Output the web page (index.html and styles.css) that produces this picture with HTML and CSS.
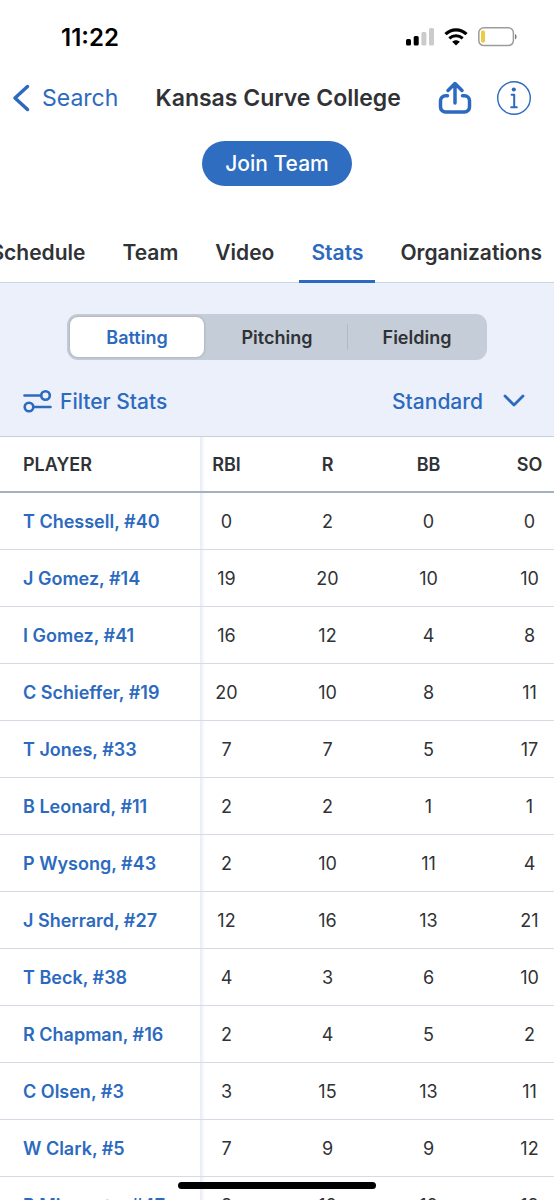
FILE: index.html
```
<!DOCTYPE html>
<html lang="en">
<head>
<meta charset="utf-8">
<meta name="viewport" content="width=device-width, initial-scale=1">
<title>Kansas Curve College</title>
<link rel="stylesheet" href="styles.css">
</head>
<body>
<div class="screen">
  <div class="status">
    <span class="clock">11:22</span>
    <div class="indicators">
      <svg width="28" height="18" viewBox="0 0 28 18"><rect x="0" y="11" width="5" height="6.500" rx="1.500"/><rect x="7.700" y="8" width="5" height="9.500" rx="1.500"/><g fill="#cbcbcb"><rect x="15.400" y="4" width="5" height="13.500" rx="1.500"/><rect x="23" y="0" width="5" height="17.500" rx="1.500"/></g></svg>
      <svg width="24" height="18" viewBox="0 0 24 18" fill="none" stroke="#000"><path d="M1.500 6.200C7.500.4 16.500.4 22.500 6.200" stroke-width="3.200"/><path d="M5.300 10.400c3.900-3.500 9.500-3.500 13.400 0" stroke-width="3"/><path d="M8.200 13.800c2.300-2 5.300-2 7.600 0L12 17.600z" fill="#000" stroke="none"/></svg>
      <svg width="40" height="20" viewBox="0 0 40 20"><rect x=".8" y=".8" width="34.600" height="17.800" rx="5" fill="none" stroke="#9c9c9c" stroke-width="1.500"/><rect x="3" y="3.500" width="4" height="12" rx="1.500" fill="#efc93e"/><path d="M37 7v5.500c2-.6 2-4.900 0-5.500z" fill="#777"/></svg>
    </div>
  </div>
  <header class="nav">
    <a class="back" href="#"><svg width="18" height="28" viewBox="0 0 18 28"><path d="M15.500 2.500L3 14l12.500 11.500" stroke-width="3.500"/></svg>Search</a>
    <h1 class="title">Kansas Curve College</h1>
    <div class="actions">
      <button class="icon" aria-label="Share"><svg width="34" height="34" viewBox="0 0 34 34" stroke-width="3.500"><path d="M9.500 14.800H7.500a5 5 0 0 0-5 5V26a5 5 0 0 0 5 5h19a5 5 0 0 0 5-5v-6.200a5 5 0 0 0-5-5h-2M17 22V3.500M10 9.500l7-7 7 7"/></svg></button>
      <button class="icon" aria-label="Team info"><svg width="36" height="36" viewBox="0 0 36 36"><circle cx="18" cy="18" r="16.300" stroke-width="1.400"/><circle cx="17.800" cy="9.500" r="2.100" fill="#2c6abf" stroke="none"/><path d="M15.600 14.700h2.600V27M15.200 27.200h5.600" stroke-width="2"/></svg></button>
    </div>
  </header>
  <div class="join-row"><button class="join">Join Team</button></div>
  <nav class="tabs">
    <a class="tab" href="#">Schedule</a>
    <a class="tab" href="#">Team</a>
    <a class="tab" href="#">Video</a>
    <a class="tab active" href="#" aria-current="page">Stats</a>
    <a class="tab" href="#">Organizations</a>
  </nav>
  <section class="controls">
    <div class="segments">
      <button class="segment selected">Batting</button>
      <button class="segment">Pitching</button>
      <button class="segment divided">Fielding</button>
    </div>
    <div class="filters">
      <button class="filter"><svg width="29" height="24" viewBox="0 0 29 24" stroke-width="2.600"><path d="M1.500 6.500H18M11 18h16.500"/><circle cx="22.500" cy="6.500" r="4.300"/><circle cx="6" cy="18" r="4.300"/></svg>Filter Stats</button>
      <button class="filter view">Standard<svg width="22" height="14" viewBox="0 0 22 14" stroke-width="2.800"><path d="M2 2l9 9 9-9"/></svg></button>
    </div>
  </section>
  <main class="stats">
    <table class="table">
      <thead><tr><th class="player" scope="col">PLAYER</th><th class="first" scope="col">RBI</th><th scope="col">R</th><th scope="col">BB</th><th scope="col">SO</th></tr></thead>
      <tbody>
        <tr><td class="player"><a href="#">T Chessell, #40</a></td><td class="first">0</td><td>2</td><td>0</td><td>0</td></tr>
        <tr><td class="player"><a href="#">J Gomez, #14</a></td><td class="first">19</td><td>20</td><td>10</td><td>10</td></tr>
        <tr><td class="player"><a href="#">I Gomez, #41</a></td><td class="first">16</td><td>12</td><td>4</td><td>8</td></tr>
        <tr><td class="player"><a href="#">C Schieffer, #19</a></td><td class="first">20</td><td>10</td><td>8</td><td>11</td></tr>
        <tr><td class="player"><a href="#">T Jones, #33</a></td><td class="first">7</td><td>7</td><td>5</td><td>17</td></tr>
        <tr><td class="player"><a href="#">B Leonard, #11</a></td><td class="first">2</td><td>2</td><td>1</td><td>1</td></tr>
        <tr><td class="player"><a href="#">P Wysong, #43</a></td><td class="first">2</td><td>10</td><td>11</td><td>4</td></tr>
        <tr><td class="player"><a href="#">J Sherrard, #27</a></td><td class="first">12</td><td>16</td><td>13</td><td>21</td></tr>
        <tr><td class="player"><a href="#">T Beck, #38</a></td><td class="first">4</td><td>3</td><td>6</td><td>10</td></tr>
        <tr><td class="player"><a href="#">R Chapman, #16</a></td><td class="first">2</td><td>4</td><td>5</td><td>2</td></tr>
        <tr><td class="player"><a href="#">C Olsen, #3</a></td><td class="first">3</td><td>15</td><td>13</td><td>11</td></tr>
        <tr><td class="player"><a href="#">W Clark, #5</a></td><td class="first">7</td><td>9</td><td>9</td><td>12</td></tr>
        <tr><td class="player"><a href="#">P Mingueta, #47</a></td><td class="first">8</td><td>10</td><td>10</td><td>18</td></tr>
      </tbody>
    </table>
  </main>
  <div class="home-bar"></div>
</div>
</body>
</html>
```
FILE: styles.css
```
* { box-sizing: border-box; }
body { margin: 0; font-family: Inter, "Liberation Sans", sans-serif; color: #303236; background: #fff; }
button { border: 0; padding: 0; background: none; font: inherit; color: inherit; }
a { color: inherit; text-decoration: none; }
svg { display: block; flex: none; }
.screen { position: relative; height: 100vh; overflow: hidden; display: flex; flex-direction: column; }
.screen > * { flex: none; }

.status { display: flex; align-items: center; justify-content: space-between; height: 74px; padding: 0 36px 0 61px; }
.clock { font-size: 24px; font-weight: 600; color: #000; }
.indicators { display: flex; align-items: center; gap: 10px; }

.nav { display: flex; align-items: center; height: 48px; padding: 0 22px 0 12px; }
.back { display: flex; align-items: center; gap: 12px; color: #2c6abf; font-size: 23px; }
.nav svg, .filter svg { fill: none; stroke: #2c6abf; stroke-linecap: round; stroke-linejoin: round; }
.title { flex: 1; margin: 0; text-align: center; font-size: 23px; font-weight: 600; white-space: nowrap; }
.actions { display: flex; align-items: center; gap: 24px; }

.join-row { display: flex; justify-content: center; padding: 19px 0 36px; }
.join { height: 45px; padding: 0 23px; border-radius: 23px; background: #2f6dc1; color: #fff; font-size: 21px; font-weight: 500; }

.tabs { display: flex; justify-content: flex-end; height: 61px; border-bottom: 1px solid #ccd5e3; }
.tab { display: flex; align-items: center; height: 61px; padding: 2px 12px 0; margin-left: 13px; font-size: 21px; font-weight: 600; border-bottom: 3px solid transparent; }
.active { color: #2c6abf; border-color: #2c6abf; }

.controls { padding: 31px 23px 0; height: 154px; background: #ebf0fa; border-bottom: 1px solid #c8d0da; }
.segments { display: grid; grid-template-columns: repeat(3, 1fr); height: 46px; margin: 0 44px; border-radius: 11px; background: #c5ced8; }
.segment { position: relative; font-size: 18px; font-weight: 600; }
.selected { margin: 3px; background: #fff; color: #2c6abf; border-radius: 8px; box-shadow: 0 0 3px rgba(0, 0, 0, .25); }
.divided::before { content: ""; position: absolute; left: 0; top: 10px; bottom: 10px; width: 1px; background: #b1bbc6; }
.filters { display: flex; justify-content: space-between; align-items: center; margin-top: 26px; padding-right: 6px; }
.filter { display: flex; align-items: center; gap: 8px; height: 30px; color: #2c6abf; font-size: 21px; font-weight: 500; }
.view { gap: 20px; }

.stats { overflow: hidden; }
.table { width: calc(100% + 26px); table-layout: fixed; border-collapse: separate; border-spacing: 0; font-size: 18px; }
.table th, .table td { height: 57px; padding: 0; text-align: center; border-bottom: 1px solid #d5dbe5; }
.table th { height: 56px; font-weight: 600; border-bottom: 2px solid #a3b1c0; }
.table .player { width: 200px; padding-left: 23px; text-align: left; white-space: nowrap; }
td.player { color: #2c6abf; font-weight: 600; }
.table .first { width: 77px; padding-right: 24px; background: linear-gradient(90deg, #e6ebf6, #fff 5px); }

.home-bar { position: absolute; left: 50%; bottom: 11px; width: 198px; height: 7px; margin-left: -99px; border-radius: 4px; background: #000; }
```
